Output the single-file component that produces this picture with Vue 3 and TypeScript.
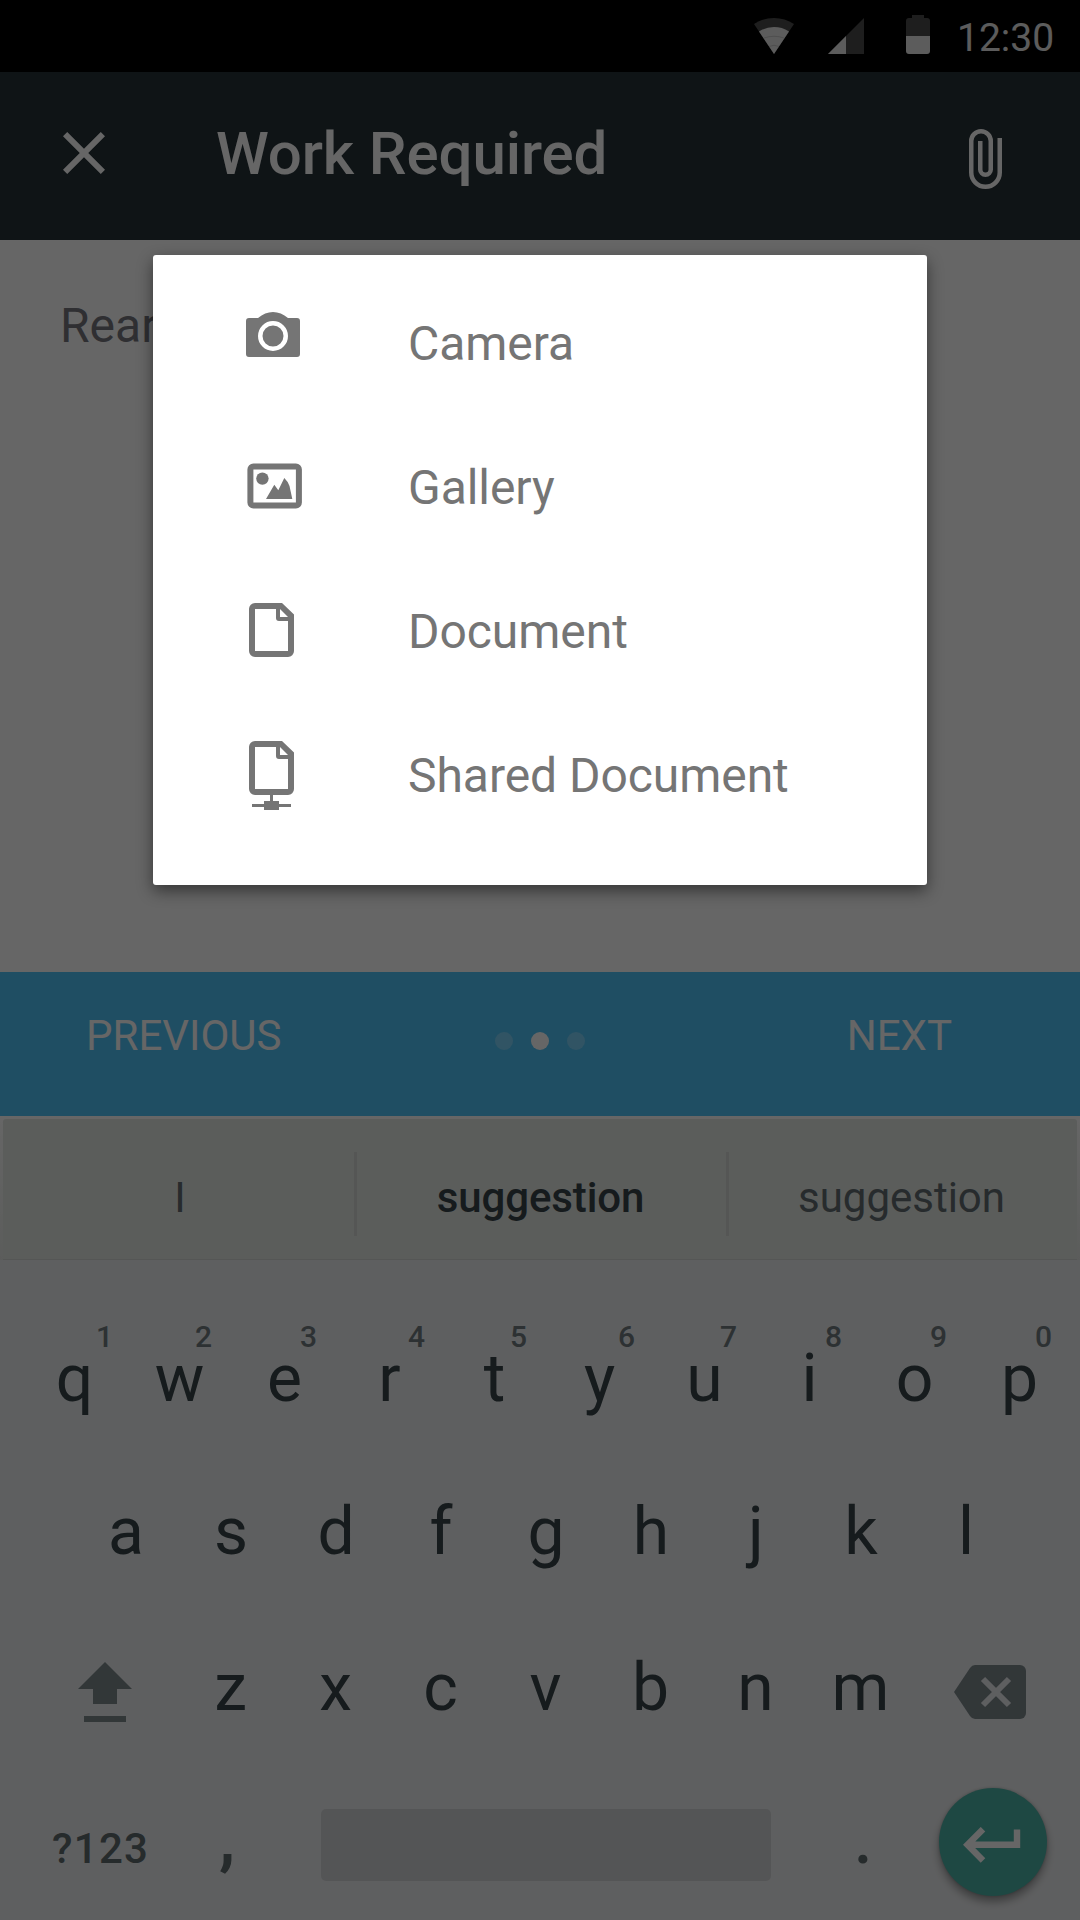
<script setup lang="ts">
interface HintKey {
  letter: string
  hint: string
  shift: number
}

interface MenuItem {
  id: string
  label: string
}

const numberRow: HintKey[] = [
  { letter: 'q', hint: '1', shift: 30 },
  { letter: 'w', hint: '2', shift: 24 },
  { letter: 'e', hint: '3', shift: 24 },
  { letter: 'r', hint: '4', shift: 27 },
  { letter: 't', hint: '5', shift: 24 },
  { letter: 'y', hint: '6', shift: 27 },
  { letter: 'u', hint: '7', shift: 24 },
  { letter: 'i', hint: '8', shift: 24 },
  { letter: 'o', hint: '9', shift: 24 },
  { letter: 'p', hint: '0', shift: 24 },
]
const homeRow: string[] = [...'asdfghjkl']
const bottomRow: string[] = [...'zxcvbnm']

const menu: MenuItem[] = [
  { id: 'camera', label: 'Camera' },
  { id: 'gallery', label: 'Gallery' },
  { id: 'document', label: 'Document' },
  { id: 'shared', label: 'Shared Document' },
]

const page =
  'M6 0H33L45 11.5V48a6 6 0 0 1-6 6H6a6 6 0 0 1-6-6V6a6 6 0 0 1 6-6Z' +
  'M6 6V48H39V18H30a3 3 0 0 1-3-3V6Z' +
  'M31 6V14H39Z'
</script>

<template>
  <div class="screen">
    <div class="status">
      <svg class="wifi" width="40" height="36" viewBox="0 0 40 36">
        <path d="M20 36L0 6Q9 0 20 0T40 6Z" fill="#4d4d4d" />
        <path d="M20 36L5 13.400Q12 9 20 9T35 13.400Z" fill="#e6e6e6" />
        <path d="M10 20Q20 16.500 30 20M15 28.500Q20 26 25 28.500" fill="none" stroke="#bdbdbd" stroke-width=".8" />
      </svg>
      <svg class="signal" width="36" height="36" viewBox="0 0 36 36">
        <path d="M0 36L36 0V36Z" fill="#4d4d4d" />
        <path d="M0 36L18 18V36Z" fill="#e6e6e6" />
      </svg>
      <svg class="battery" width="24" height="39" viewBox="0 0 24 39">
        <path d="M6 0H18V3H21a3 3 0 0 1 3 3V21H0V6a3 3 0 0 1 3-3H6Z" fill="#4d4d4d" />
        <path d="M0 21H24V36a3 3 0 0 1-3 3H3a3 3 0 0 1-3-3Z" fill="#e6e6e6" />
      </svg>
      <span class="time">12:30</span>
    </div>

    <header class="appbar">
      <svg class="close" width="42" height="42" viewBox="5 5 14 14">
        <path d="M19 6.410L17.590 5 12 10.590 6.410 5 5 6.410 10.590 12 5 17.590 6.410 19 12 13.410 17.590 19 19 17.590 13.410 12Z" fill="#fff" />
      </svg>
      <h1 class="title">Work Required</h1>
      <svg class="attach" width="33" height="60" viewBox="0 0 33 60">
        <path
          d="M30.750 9V43.500a14.250 14.250 0 0 1-28.500 0V12a9.750 9.750 0 0 1 19.500 0V40.500a5.250 5.250 0 0 1-10.500 0V12"
          fill="none" stroke="#fff" stroke-width="4.500"
        />
      </svg>
    </header>

    <main class="content">Rear</main>

    <nav class="pager">
      <span class="previous">PREVIOUS</span>
      <span class="dots"><i class="dot" /><i class="dot active" /><i class="dot" /></span>
      <span class="next">NEXT</span>
    </nav>

    <section class="suggestions">
      <div class="panel">
        <span class="word first">I</span>
        <i class="rule" />
        <span class="word main">suggestion</span>
        <i class="rule" />
        <span class="word last">suggestion</span>
      </div>
    </section>

    <section class="keyboard">
      <div class="row">
        <span v-for="k in numberRow" :key="k.letter" class="key">
          {{ k.letter }}
          <small class="hint" :style="{ left: `${k.shift + 37.5}px` }">{{ k.hint }}</small>
        </span>
      </div>
      <div class="row home">
        <span v-for="k in homeRow" :key="k" class="key">{{ k }}</span>
      </div>
      <div class="row third">
        <span class="shift">
          <svg width="54" height="60" viewBox="0 0 54 60" fill="#7d898d">
            <path d="M27 0L54 27H39V42H15V27H0ZM6 54H48V60H6Z" />
          </svg>
        </span>
        <span v-for="k in bottomRow" :key="k" class="key">{{ k }}</span>
        <span class="backspace">
          <svg width="72" height="54" viewBox="0 0 72 54">
            <path d="M21 0H66a6 6 0 0 1 6 6V48a6 6 0 0 1-6 6H21Q18 54 16 51L0 27L16 3Q18 0 21 0Z" fill="#7d898d" />
            <path d="M29 14L55 40M55 14L29 40" stroke="#ecedf0" stroke-width="6" />
          </svg>
        </span>
      </div>
      <div class="row fourth">
        <span class="symbols">?123</span>
        <span class="mark comma">,</span>
        <span class="space" />
        <span class="mark period">.</span>
        <span class="enter">
          <svg width="58" height="36" viewBox="0 0 58 36">
            <path d="M20 2.200L4.500 17.800L20 33.500M4.500 17.800H54V2.500" fill="none" stroke="#fff" stroke-width="6.400" />
          </svg>
        </span>
      </div>
    </section>

    <div class="scrim">
      <div class="dialog">
        <div v-for="item in menu" :key="item.id" class="item">
          <svg class="item-icon" width="60" height="144" viewBox="0 0 60 144" fill="#757575">
            <template v-if="item.id === 'camera'">
              <path d="M3 46H12Q19 40 27 40T42 46H51a3 3 0 0 1 3 3V82a3 3 0 0 1-3 3H3a3 3 0 0 1-3-3V49a3 3 0 0 1 3-3Z" />
              <circle cx="27" cy="64" r="12.750" fill="none" stroke="#fff" stroke-width="4.500" />
            </template>
            <template v-else-if="item.id === 'gallery'">
              <rect x="4.400" y="50.400" width="48.500" height="39.200" rx="3" fill="none" stroke="#757575" stroke-width="6" />
              <circle cx="16.400" cy="62.600" r="6.200" />
              <path d="M20 83L28.300 68.700L32.300 74.300L38.300 62Q42 65.500 43.500 70L46.300 83Z" />
            </template>
            <path v-else-if="item.id === 'document'" :d="page" transform="translate(3 43)" fill-rule="evenodd" />
            <g v-else transform="translate(3 37)">
              <path :d="page" fill-rule="evenodd" />
              <path d="M21 54H24V60H30V63H42V66H30V69H15V66H3V63H15V60H21Z" />
            </g>
          </svg>
          <span class="label">{{ item.label }}</span>
        </div>
      </div>
    </div>
  </div>
</template>

<style>
body {
  margin: 0;
  background: #666;
}
</style>

<style scoped>
.screen {
  position: relative;
  display: flex;
  flex-direction: column;
  width: 1080px;
  height: 1920px;
  overflow: hidden;
  background: #fff;
  font-family: Roboto, "Noto Sans", sans-serif;
}

svg {
  display: block;
  flex: none;
}

.status {
  display: flex;
  height: 72px;
  box-sizing: border-box;
  padding-left: 754px;
  background: #000;
}

.wifi,
.signal {
  margin-top: 18px;
}

.signal {
  margin-left: 34px;
}

.battery {
  margin: 15px 0 0 42px;
}

.time {
  margin-left: 27px;
  line-height: 77px;
  font-size: 39px;
  color: #e6e6e6;
}

.appbar {
  display: flex;
  align-items: flex-start;
  height: 168px;
  background: #263238;
}

.close {
  margin: 60px 0 0 63px;
}

.title {
  margin: 0 auto 0 111px;
  line-height: 163px;
  font-size: 60px;
  font-weight: 500;
  letter-spacing: -.1px;
  color: #fff;
}

.attach {
  margin: 57px 78px 0 0;
}

.content {
  height: 732px;
  box-sizing: border-box;
  padding: 50px 0 0 60px;
  line-height: 71px;
  font-size: 48px;
  color: #76767e;
}

.pager {
  display: flex;
  justify-content: space-between;
  height: 144px;
  box-sizing: border-box;
  padding: 0 128px 0 86px;
  background: #4fc3f7;
  line-height: 127px;
  font-size: 42px;
  color: #fff;
}

.previous,
.next {
  width: 240px;
}

.next {
  text-align: right;
}

.dots {
  display: flex;
  gap: 18px;
  margin: 60px 0 0 42px;
}

.dot {
  width: 18px;
  height: 18px;
  border-radius: 50%;
  background: #fff;
  opacity: .25;
}

.dot.active {
  opacity: 1;
}

.suggestions {
  height: 144px;
  box-sizing: border-box;
  padding: 3px 3px 0;
  background: linear-gradient(#fff, #e4e7e4);
}

.panel {
  display: flex;
  height: 141px;
  box-sizing: border-box;
  border-bottom: 1px solid #d4d6d4;
  border-radius: 3px 3px 0 0;
  background: #e3e8e4;
}

.word {
  line-height: 157px;
  font-size: 42px;
  text-align: center;
  color: #616c70;
}

.first {
  width: 351px;
  box-sizing: border-box;
  padding-left: 3px;
}

.main {
  width: 369px;
  box-sizing: border-box;
  padding-right: 2px;
  font-weight: 500;
  letter-spacing: -.1px;
  color: #374449;
}

.last {
  width: 345px;
}

.rule {
  width: 3px;
  height: 84px;
  margin-top: 33px;
  background: #d5d8d5;
}

.keyboard {
  height: 660px;
  box-sizing: border-box;
  padding-top: 42px;
  background: #eceef0;
}

.row {
  display: flex;
  height: 153px;
  padding-left: 22px;
}

.home {
  padding-left: 73.5px;
}

.key {
  position: relative;
  width: 105px;
  line-height: 153px;
  font-size: 66px;
  text-align: center;
  color: #374449;
}

.hint {
  position: absolute;
  top: 15px;
  width: 30px;
  line-height: 40px;
  font-size: 30px;
  font-weight: 500;
  color: #707c80;
}

.third {
  height: 159px;
  padding-left: 0;
}

.third .key {
  line-height: 159px;
}

.shift {
  width: 100px;
  padding: 54px 0 0 78px;
}

.backspace {
  padding: 57px 0 0 41px;
}

.fourth {
  padding-left: 52px;
  color: #5f6b6f;
}

.symbols {
  width: 159px;
  line-height: 163px;
  font-size: 42px;
  font-weight: 500;
  letter-spacing: 1.3px;
}

.mark {
  font-size: 66px;
  font-weight: 500;
  line-height: 148px;
}

.comma {
  width: 110px;
  font-weight: 700;
  line-height: 146px;
  text-indent: 8px;
}

.space {
  width: 450px;
  height: 72px;
  margin-top: 42px;
  border-radius: 5px;
  background: #d3d5d8;
}

.period {
  width: 168px;
  text-indent: 83px;
}

.enter {
  width: 108px;
  height: 108px;
  box-sizing: border-box;
  margin-top: 21px;
  padding: 39px 0 0 24px;
  border-radius: 50%;
  background: #4db3a8;
  box-shadow: 0 6px 8px rgba(0, 0, 0, .35), 0 0 3px rgba(0, 0, 0, .2);
}

.scrim {
  position: absolute;
  inset: 0;
  display: flex;
  justify-content: center;
  align-items: flex-start;
  padding-top: 255px;
  background: rgba(0, 0, 0, .6);
}

.dialog {
  width: 774px;
  height: 630px;
  box-sizing: border-box;
  padding: 17px 0 0 93px;
  border-radius: 3px;
  background: #fff;
  box-shadow: 0 6px 16px rgba(0, 0, 0, .48);
}

.item {
  display: flex;
  height: 144px;
}

.label {
  margin-left: 102px;
  line-height: 144px;
  font-size: 48px;
  letter-spacing: -.05px;
  color: #757575;
}
</style>
